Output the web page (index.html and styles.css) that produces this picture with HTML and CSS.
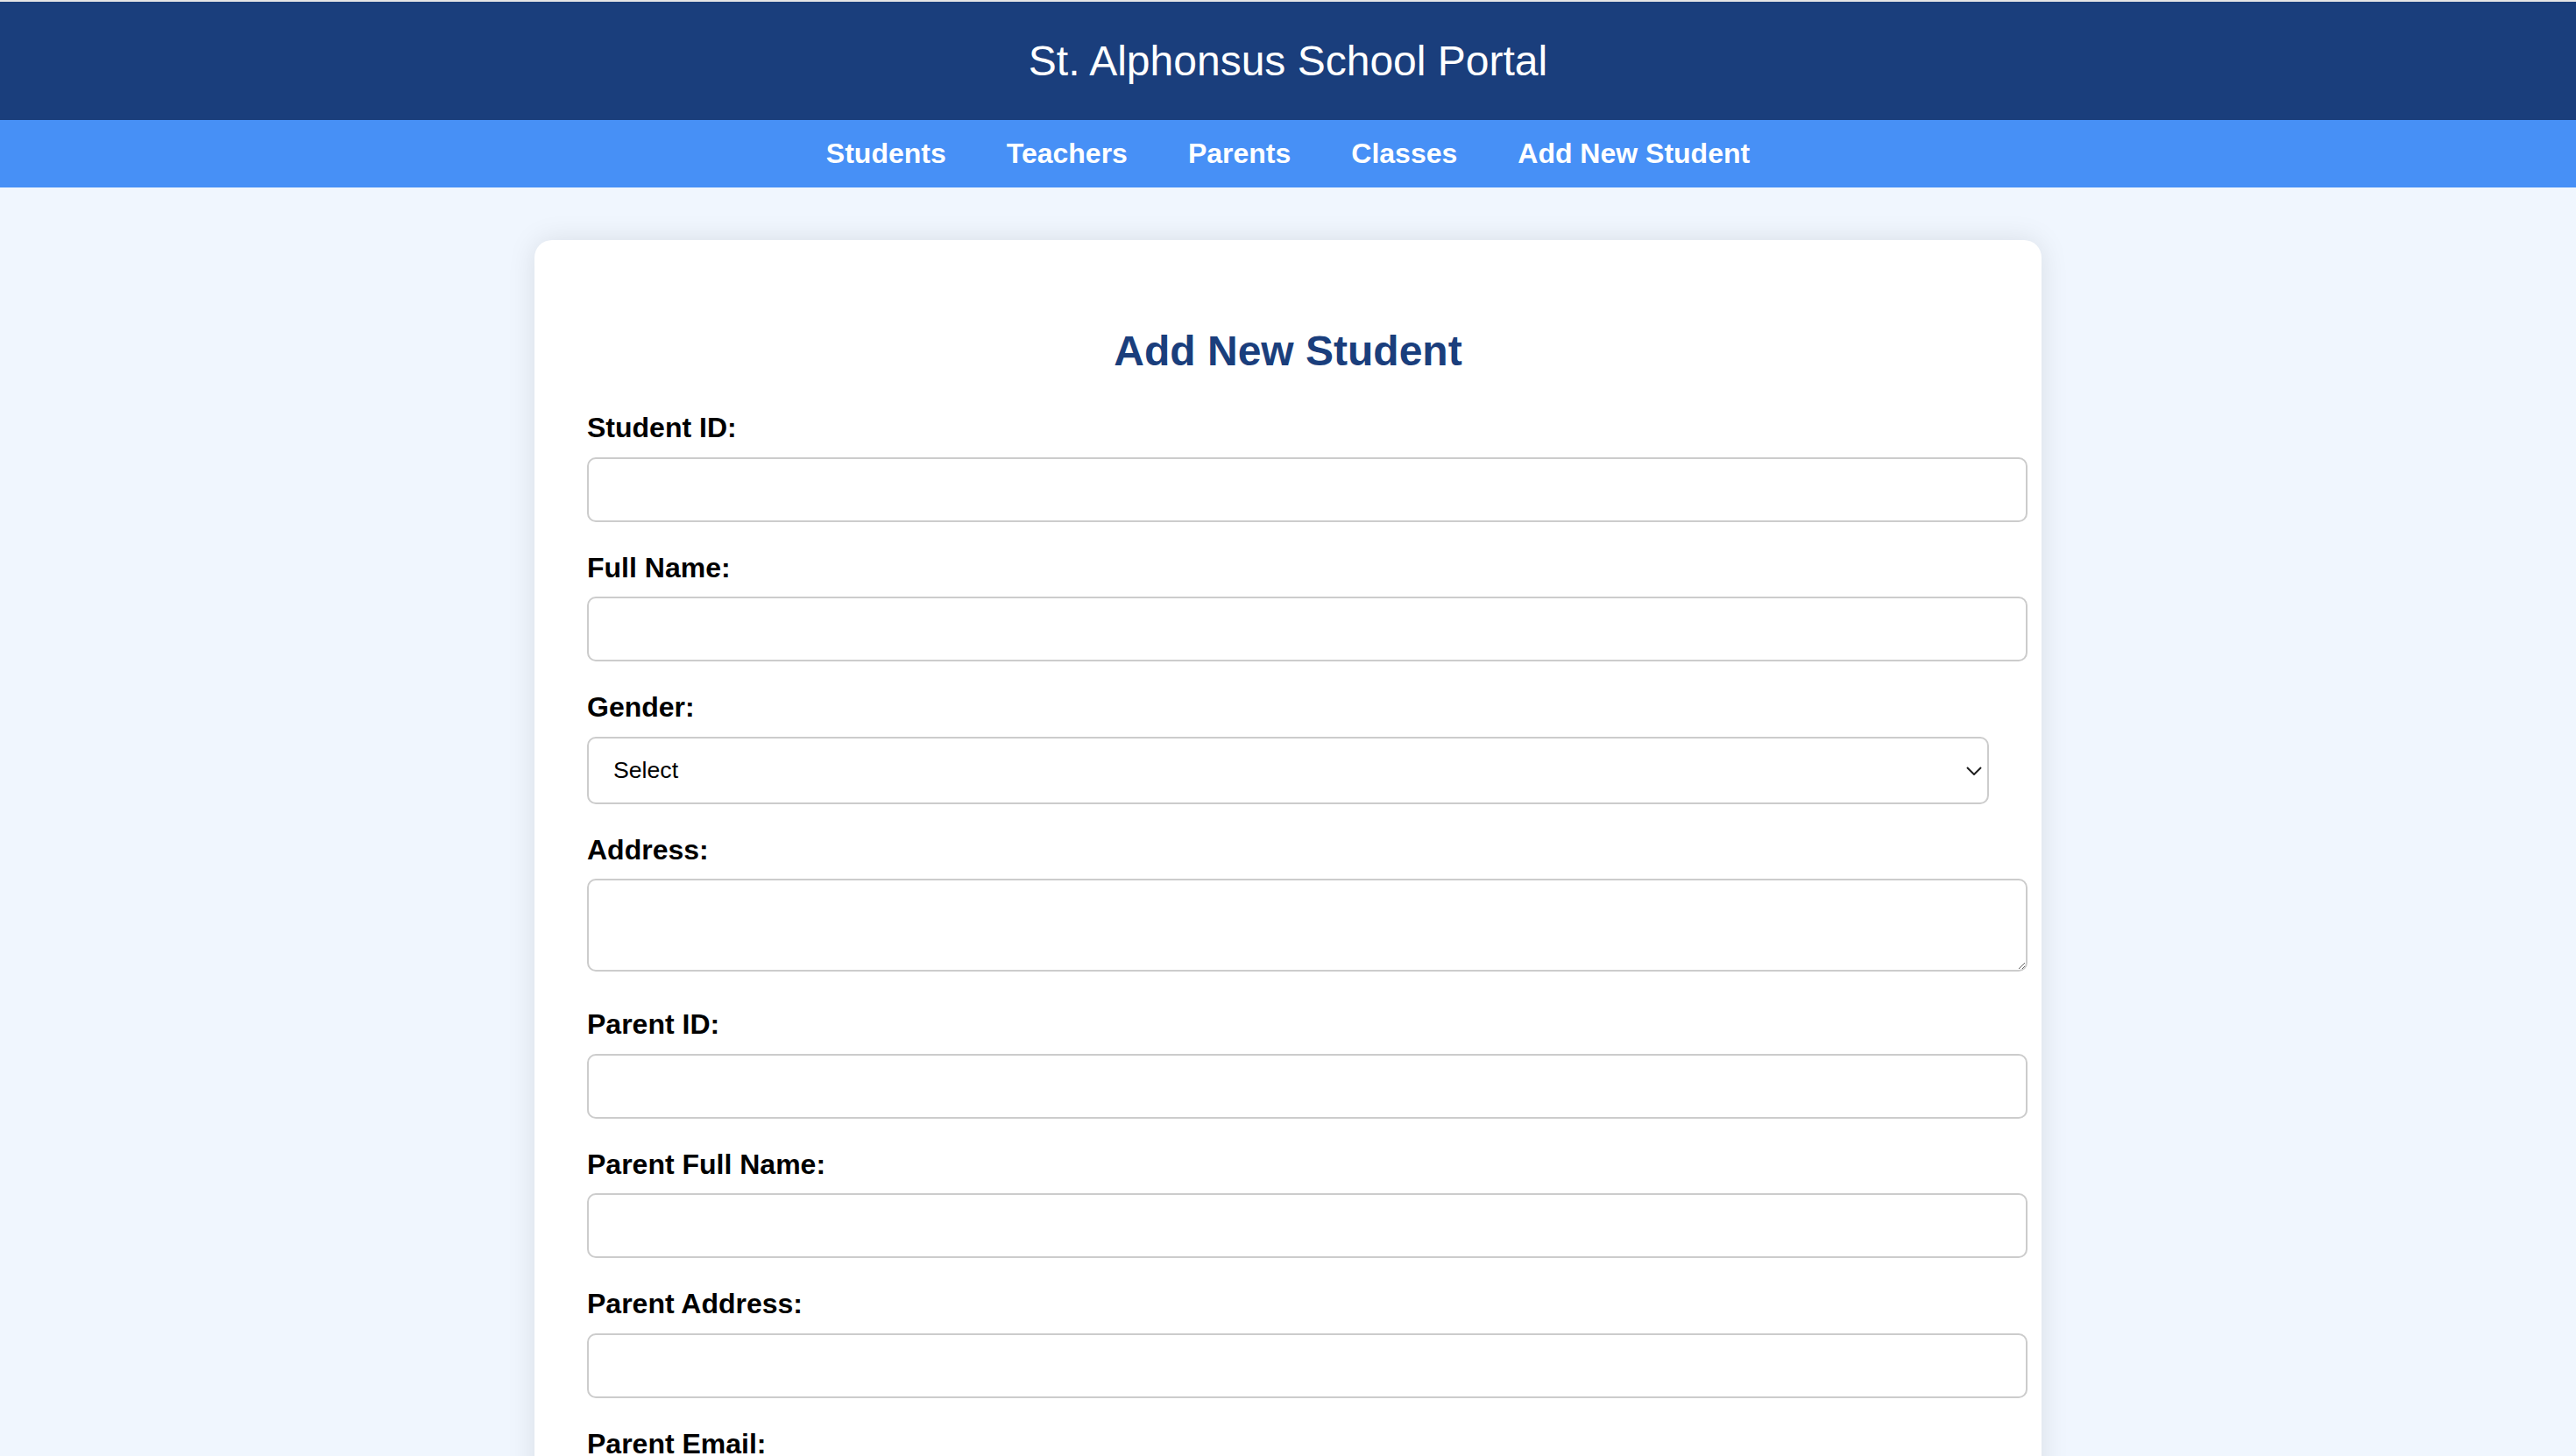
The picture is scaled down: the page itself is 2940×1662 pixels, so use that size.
FILE: index.html
```html
<!DOCTYPE html>
<html lang="en">
<head>
<meta charset="utf-8">
<title>St. Alphonsus School Portal</title>
<link rel="stylesheet" href="styles.css">
</head>
<body>
<header class="site-header">
  <h1 class="site-title">St. Alphonsus School Portal</h1>
</header>
<nav class="site-nav">
  <a href="#" class="nav-link">Students</a>
  <a href="#" class="nav-link">Teachers</a>
  <a href="#" class="nav-link">Parents</a>
  <a href="#" class="nav-link">Classes</a>
  <a href="#" class="nav-link">Add New Student</a>
</nav>
<main class="card">
  <h2 class="card-title">Add New Student</h2>
  <form class="student-form">
    <label class="field-label" for="sid">Student ID:</label>
    <input class="field-input" type="text" id="sid">

    <label class="field-label" for="fname">Full Name:</label>
    <input class="field-input" type="text" id="fname">

    <label class="field-label" for="gender">Gender:</label>
    <div class="select-wrap">
      <select class="field-select" id="gender">
        <option>Select</option>
        <option>Male</option>
        <option>Female</option>
      </select>
      <svg class="select-chevron" width="18" height="10" viewBox="0 0 18 10" aria-hidden="true">
        <polyline points="1,1 9,9 17,1" fill="none" stroke="#1f1f1f" stroke-width="2"/>
      </svg>
    </div>

    <label class="field-label" for="addr">Address:</label>
    <textarea class="field-textarea" id="addr"></textarea>

    <label class="field-label" for="pid">Parent ID:</label>
    <input class="field-input" type="text" id="pid">

    <label class="field-label" for="pname">Parent Full Name:</label>
    <input class="field-input" type="text" id="pname">

    <label class="field-label" for="paddr">Parent Address:</label>
    <input class="field-input" type="text" id="paddr">

    <label class="field-label" for="pemail">Parent Email:</label>
    <input class="field-input" type="email" id="pemail">

    <label class="field-label" for="pphone">Parent Phone:</label>
    <input class="field-input" type="text" id="pphone">
  </form>
</main>
</body>
</html>
```

FILE: styles.css
```css
html, body {
  margin: 0;
  padding: 0;
}

body {
  background: #f0f6fe;
  font-family: "Liberation Sans", Arial, Helvetica, sans-serif;
  color: #000;
}

.site-header {
  background: #1a3e7c;
  border-top: 2px solid #e6e6e6;
  padding: 40px 0 40px;
  text-align: center;
}

.site-title {
  margin: 0;
  font-size: 48px;
  font-weight: normal;
  color: #ffffff;
  line-height: normal;
}

.site-nav {
  background: #4790f6;
  display: flex;
  justify-content: center;
  gap: 69px;
  padding: 20px 0;
}

.nav-link {
  color: #ffffff;
  font-size: 32px;
  font-weight: bold;
  text-decoration: none;
  line-height: normal;
}

.card {
  width: 1600px;
  margin: 60px auto 0;
  padding: 60px;
  background: #ffffff;
  border-radius: 20px;
  box-shadow: 0 0 32px rgba(0, 0, 0, 0.1);
}

.card-title {
  margin: 39px 0 42px;
  text-align: center;
  font-size: 48px;
  font-weight: bold;
  color: #1a3e7c;
  line-height: normal;
}

.student-form {
  display: flex;
  flex-direction: column;
  align-items: flex-start;
}

.field-label {
  display: block;
  font-size: 32px;
  font-weight: bold;
  line-height: normal;
  margin-bottom: 14.5px;
}

.field-input,
.field-textarea {
  width: 100%;
  box-sizing: content-box;
  padding: 20px;
  border: 2px solid #cccccc;
  border-radius: 10px;
  font-family: "Liberation Sans", Arial, Helvetica, sans-serif;
  font-size: 26.67px;
  background: #ffffff;
  margin: 0 0 34px;
}

.field-input {
  height: 30px;
}

.field-textarea {
  height: 62px;
  margin-bottom: 42px;
  resize: both;
  display: block;
}

.select-wrap {
  position: relative;
  width: 100%;
  margin-bottom: 34px;
}

.field-select {
  display: block;
  width: 100%;
  height: 77px;
  box-sizing: border-box;
  -webkit-appearance: none;
  appearance: none;
  padding: 0 40px 0 28px;
  border: 2px solid #cccccc;
  border-radius: 10px;
  background: #ffffff;
  font-family: "Liberation Sans", Arial, Helvetica, sans-serif;
  font-size: 26.67px;
  color: #000000;
}

.select-chevron {
  position: absolute;
  right: 8px;
  top: 34px;
  pointer-events: none;
}
```
